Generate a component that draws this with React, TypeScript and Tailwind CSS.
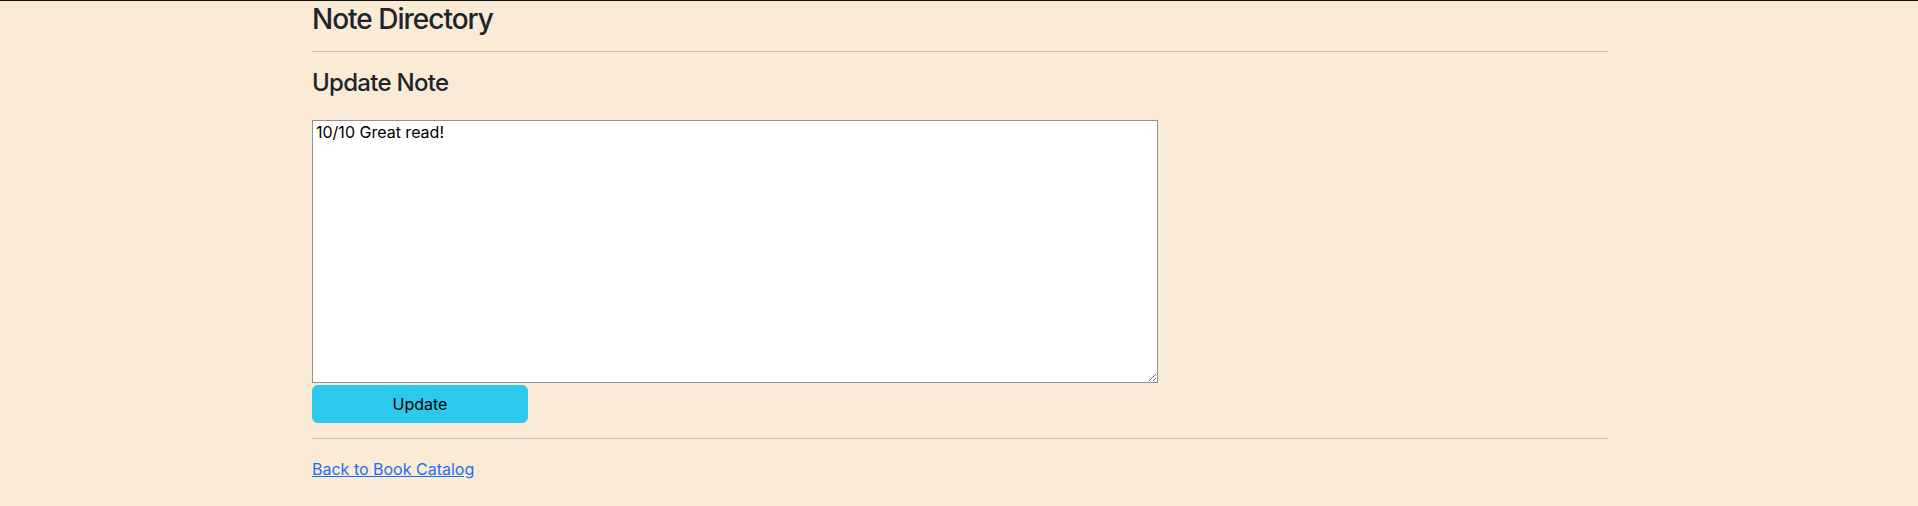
import React, { useState } from 'react';

const App: React.FC = (): JSX.Element => {
  const [note, setNote] = useState('10/10 Great read!');

  return (
    <div className="min-h-[506px] w-full bg-[#faebd7] border-t border-[#111] text-[#212529] font-['Inter',sans-serif]">
      <div className="mx-auto w-[1320px] pl-[13px] pr-[11px]">
        <h3 className="pt-[2px] text-[28px] font-medium leading-[1.2] tracking-[-1px]">
          Note Directory
        </h3>
        <hr className="mt-[14px] mb-[17px] border-t border-[#c9bcab]" />
        <h4 className="text-[24px] font-medium leading-[1.2] tracking-[-0.7px]">
          Update Note
        </h4>
        <form
          className="mt-[23px] flex flex-col items-start"
          onSubmit={(e) => e.preventDefault()}
        >
          <textarea
            value={note}
            onChange={(e) => setNote(e.target.value)}
            className="block h-[263px] w-[846px] border border-[#8f8f9d] bg-white px-[3px] py-[2px] text-[16px] leading-[1.2] text-black outline-none"
          />
          <button
            type="submit"
            className="mt-[2px] h-[38px] w-[216px] rounded-md border border-[#2cc9ed] bg-[#2cc9ed] text-[16px] text-black"
          >
            Update
          </button>
        </form>
        <hr className="mt-[15px] mb-[18px] border-t border-[#c9bcab]" />
        <a href="#" className="text-[16px] text-[#1a6ef5] underline">
          Back to Book Catalog
        </a>
      </div>
    </div>
  );
};

export default App;
